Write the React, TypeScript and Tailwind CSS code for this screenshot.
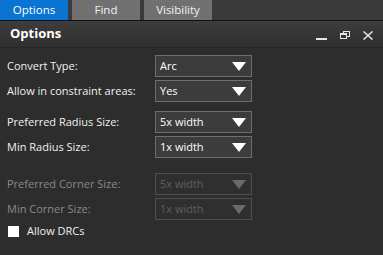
import { useState } from "react";

const font = { fontFamily: '"Open Sans", "Noto Sans", sans-serif' };

function Caret({ disabled }: { disabled?: boolean }) {
  return (
    <svg width="14" height="9" viewBox="0 0 14 9" className="shrink-0">
      <path d="M0 0 H14 L7 9 Z" fill={disabled ? "#6a6a6a" : "#ffffff"} />
    </svg>
  );
}

function Row({
  label,
  value,
  disabled,
  className,
}: {
  label: string;
  value: string;
  disabled?: boolean;
  className?: string;
}) {
  return (
    <div className={`flex items-center h-[22px] ${className ?? ""}`}>
      <div className={`w-[155px] pl-[7px] text-[11px] ${disabled ? "text-[#8a8a8a]" : "text-[#f0f0f0]"}`}>
        {label}
      </div>
      <div
        className={`w-[97px] h-[22px] flex items-center justify-between pl-[4px] pr-[5px] border ${
          disabled
            ? "border-[#4e4e4e] bg-[#2f2f2f] text-[#5f5f5f]"
            : "border-[#6e6e6e] bg-[#3c3c3c] text-white"
        } text-[11px]`}
      >
        <span>{value}</span>
        <Caret disabled={disabled} />
      </div>
    </div>
  );
}

export default function App() {
  const [tab, setTab] = useState("Options");
  const tabs = ["Options", "Find", "Visibility"];

  return (
    <div className="w-[383px] h-[255px] bg-[#2d2d2d] overflow-hidden flex flex-col" style={font}>
      <div className="h-[20px] bg-[#3a3a3a] flex gap-[4px] shrink-0">
        {tabs.map((t) => (
          <button
            key={t}
            onClick={() => setTab(t)}
            className={`w-[68px] h-[20px] text-[11.5px] leading-[20px] text-center ${
              tab === t ? "bg-[#0a74d2] text-white" : "bg-[#717171] text-[#f2f2f2]"
            }`}
          >
            {t}
          </button>
        ))}
      </div>
      <div className="h-[1px] bg-[#111111] shrink-0" />
      <div className="h-[26px] bg-gradient-to-b from-[#3d3d3d] to-[#2f2f2f] flex items-center pl-[10px] pr-[10px] shrink-0">
        <span className="text-white font-bold text-[13px]">Options</span>
        <div className="ml-auto flex items-center gap-[13px] pt-[2px]">
          <svg width="11" height="10" viewBox="0 0 11 10">
            <rect x="0" y="8" width="11" height="2" fill="#e6e6e6" />
          </svg>
          <svg width="10" height="8" viewBox="0 0 10 8">
            <rect x="3.5" y="0.5" width="6" height="5" fill="none" stroke="#e6e6e6" />
            <rect x="0.5" y="2.5" width="6" height="5" fill="#333" stroke="#e6e6e6" />
            <rect x="0.5" y="2.5" width="6" height="1.5" fill="#e6e6e6" />
          </svg>
          <svg width="10" height="9" viewBox="0 0 10 9">
            <path d="M0.5 0.5 L9.5 8.5 M9.5 0.5 L0.5 8.5" stroke="#e6e6e6" strokeWidth="1.5" />
          </svg>
        </div>
      </div>
      <div className="h-[1px] bg-[#262626] shrink-0" />
      <div className="flex flex-col pt-[7px]">
        <Row label="Convert Type:" value="Arc" />
        <Row label="Allow in constraint areas:" value="Yes" className="mt-[3px]" />
        <Row label="Preferred Radius Size:" value="5x width" className="mt-[9px]" />
        <Row label="Min Radius Size:" value="1x width" className="mt-[3px]" />
        <Row label="Preferred Corner Size:" value="5x width" disabled className="mt-[15px]" />
        <Row label="Min Corner Size:" value="1x width" disabled className="mt-[3px]" />
        <label className="flex items-center mt-[4px] pl-[8px] h-[14px]">
          <span className="w-[11px] h-[11px] bg-white" />
          <span className="ml-[8px] text-[11px] text-[#f0f0f0]">Allow DRCs</span>
        </label>
      </div>
    </div>
  );
}
